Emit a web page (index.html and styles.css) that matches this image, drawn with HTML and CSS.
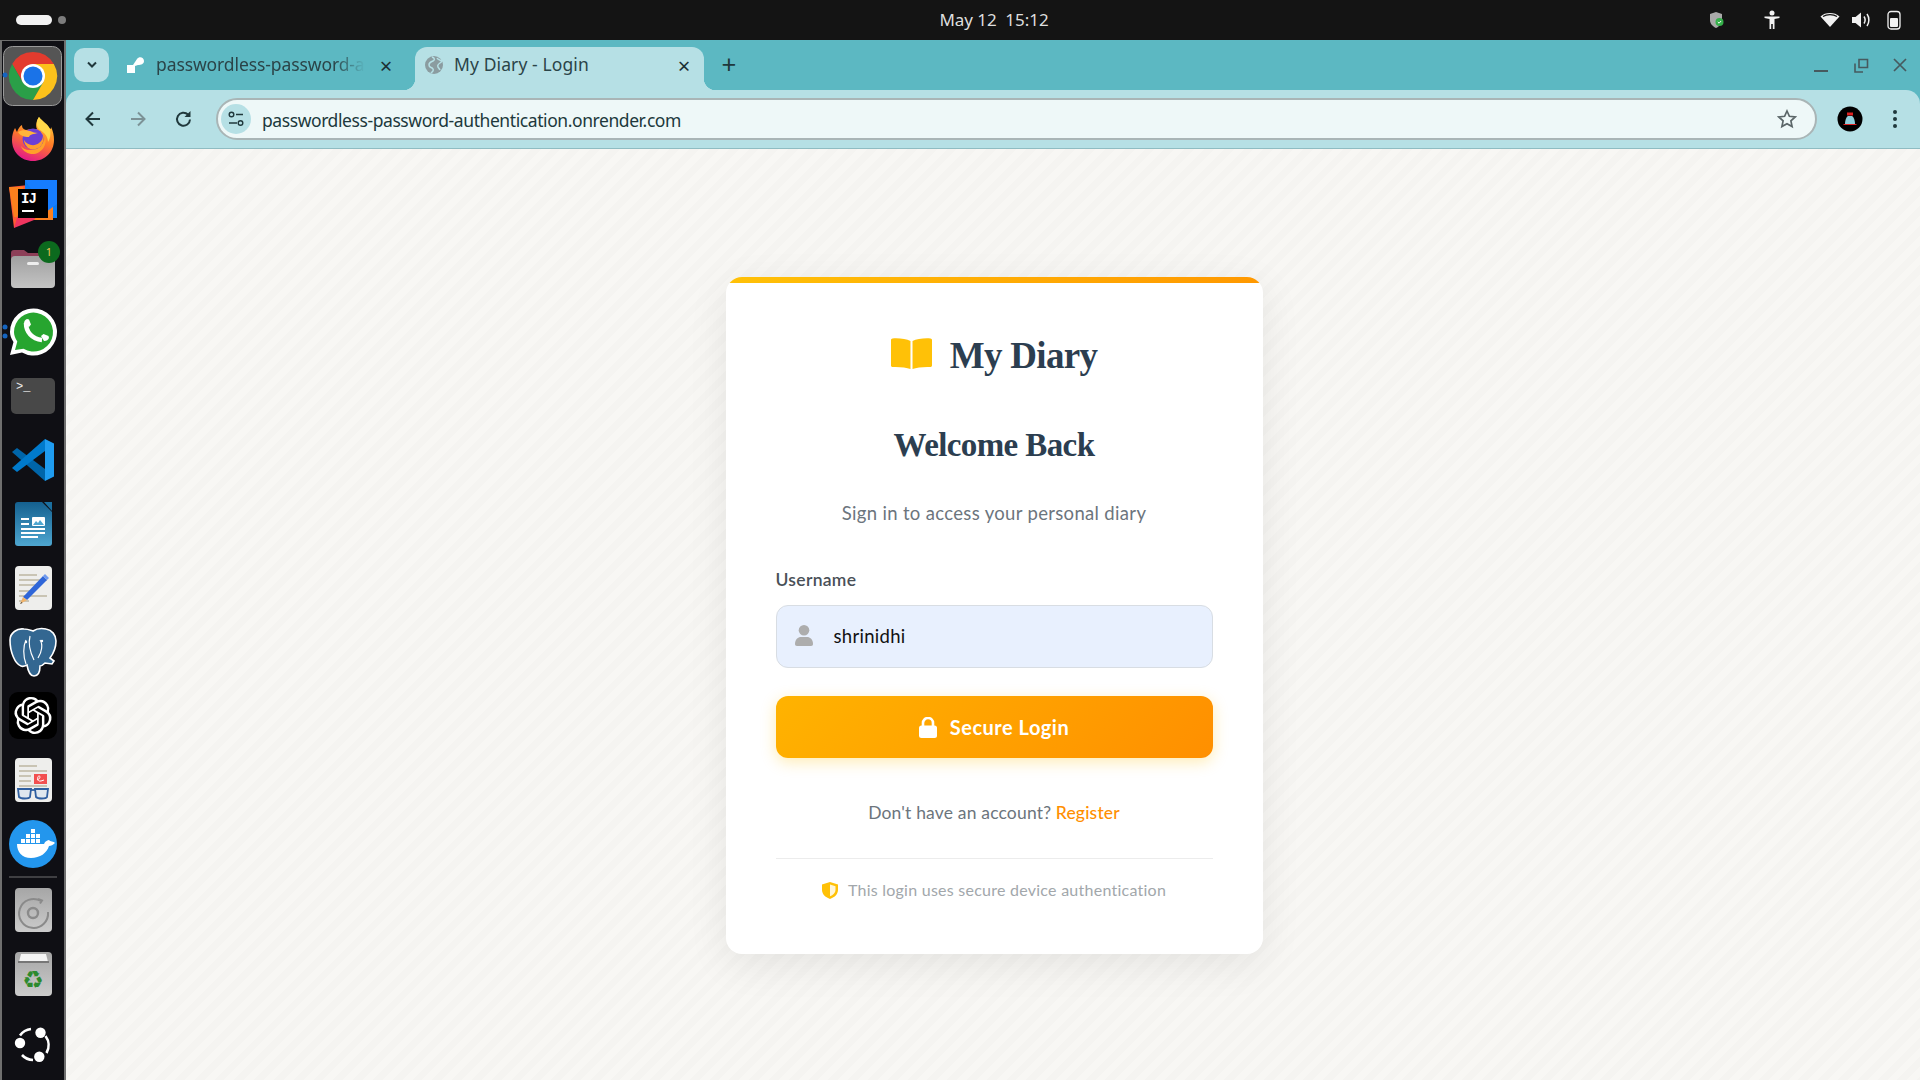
FILE: index.html
```html
<!DOCTYPE html>
<html lang="en">
<head>
  <meta charset="UTF-8" />
  <meta name="viewport" content="width=device-width, initial-scale=1.0"/>
  <title>My Diary - Login</title>
  <link rel="stylesheet" href="styles.css">
</head>
<body>
  <!-- gnome top bar -->
  <header class="topbar">
    <div class="workspaces"><span class="pill"></span><span class="dot"></span></div>
    <div class="clock">May 12&nbsp;&nbsp;15:12</div>
    <div class="tray">
      <svg class="tray-shield" width="16" height="18" viewBox="0 0 16 18"><path d="M7 1l6 2v6c0 4-3 6.500-6 8-3-1.500-6-4-6-8V3z" fill="#a9a9a9"/><circle cx="10.500" cy="11" r="4" fill="#35b04a"/><path d="M8.800 11l1.300 1.200 2-2.200" stroke="#fff" stroke-width="1" fill="none"/></svg>
      <svg class="tray-person" width="18" height="20" viewBox="0 0 18 20"><circle cx="9" cy="3" r="2.500" fill="#f2f2f2"/><path d="M1.500 6.500h15v1.600l-5 .9V19H9.800v-5H8.200v5H6.500V9l-5-.9z" fill="#f2f2f2"/></svg>
      <svg class="tray-wifi" width="20" height="16" viewBox="0 0 20 16"><path d="M10 15L.500 4.500C3 2 6.300 1 10 1s7 1 9.500 3.500z" fill="#f2f2f2"/><path d="M3 4.600C5 3.200 7.400 2.600 10 2.600s5 .6 7 2" stroke="#141414" stroke-width="1.200" fill="none"/></svg>
      <svg class="tray-volume" width="19" height="18" viewBox="0 0 19 18"><path d="M0 6h3.500L9 1.500v15L3.500 12H0z" fill="#f2f2f2"/><path d="M12 5.500c1.300 2 1.300 5 0 7M15 3c2.500 3.500 2.500 8.500 0 12" stroke="#f2f2f2" stroke-width="1.500" fill="none"/></svg>
      <svg class="tray-battery" width="14" height="20" viewBox="0 0 14 20"><rect x="1" y="1.500" width="12" height="17.500" rx="3" fill="none" stroke="#f2f2f2" stroke-width="1.300"/><rect x="3" y="8" width="8" height="9" rx="1" fill="#f2f2f2"/></svg>
    </div>
  </header>

  <div class="desktop">
    <!-- ubuntu dock -->
    <nav class="dock">
      <svg class="dock-item" viewBox="0 0 66 64"><rect x="3.500" y="2.500" width="58" height="59" rx="9" fill="#555" stroke="#9a9a9a"/><circle cx="5" cy="31" r="2.500" fill="#1565c0"/><path d="M53.800 20A24 24 0 0 0 12.200 20L22.600 38 33 20z" fill="#e33b2e"/><path d="M12.200 20A24 24 0 0 0 33 56L43.400 38H22.600z" fill="#2a9f48"/><path d="M33 56A24 24 0 0 0 53.800 20H33L43.400 38z" fill="#fcc11b"/><circle cx="33" cy="32" r="12" fill="#fff"/><circle cx="33" cy="32" r="9.500" fill="#1a73e8"/></svg>

      <svg class="dock-item" viewBox="0 0 66 64">
        <defs><linearGradient id="fx" x1="0.750" y1="0" x2="0.350" y2="1"><stop offset="0" stop-color="#ffcf3a"/><stop offset=".5" stop-color="#ff7a28"/><stop offset="1" stop-color="#e3178a"/></linearGradient></defs>
        <path d="M39 9c2 4 9 8 11 12 1 0 1-1 1-2 2 4 3 8 3 13 0 12-9 21-21 21S12 44 12 32c0-5 1-8 3-12 1 1 1 3 2 4 1-3 3-6 5-7 0 3 1 4 4 5 3-1 8-1 11-1-2-4 0-9 2-12z" fill="url(#fx)"/>
        <path d="M39 9c-3 4-3 10 1 13 5 3 8 7 8 12 2-3 3-7 2-13-2-5-8-8-11-12z" fill="#ffd84a"/>
        <path d="M45 28c3 9-4 19-14 18-5-1-9-4-10-8 3 4 8 5 13 3 7-2 11-7 11-13z" fill="#ffa02a"/>
        <circle cx="33" cy="31" r="10.500" fill="#6b3fd4"/>
        <path d="M24 32c3 5 10 7 15 3 3-2 4-5 4-8 1 5 0 9-3 12-4 3-9 3-12 1-2-2-4-5-4-8z" fill="#ff9e2c"/>
        <path d="M18 24c3-2 8-2 12-1 3 1 5 2 8 2-4 1-8 1-9 4-2 0-8 0-11-5z" fill="#ffb43a"/>
      </svg>

      <svg class="dock-item" viewBox="0 0 66 64"><path d="M9 15l20-2-3 32-12 11z" fill="#ff5a36"/><path d="M9 15h14l6 30H14z" fill="#fc801d"/><path d="M25 8h32v38H25z" fill="#0a7cf4"/><path d="M14 56l8-26 30 1v17H34z" fill="#f0355f"/><path d="M46 32h7v16H34z" fill="#fc801d"/><path d="M25 8h32v24L46 40z" fill="#167dff"/><rect x="18" y="17" width="30" height="29" fill="#000"/><text class="ij" x="21" y="31">IJ</text><rect x="22" y="38" width="12" height="2" fill="#fff"/></svg>

      <svg class="dock-item" viewBox="0 0 66 64"><path d="M11 17c0-2 1-3 3-3h10l4 3h22c2 0 3 1 3 3v8H11z" fill="#8d3f58"/><rect x="11" y="20" width="44" height="32" rx="4" fill="url(#fileg)"/><defs><linearGradient id="fileg" x1="0" y1="0" x2="0" y2="1"><stop offset="0" stop-color="#a0a0a0"/><stop offset="1" stop-color="#c4c4c4"/></linearGradient></defs><rect x="27" y="26" width="12" height="3" rx="1.500" fill="#eee"/><circle cx="49" cy="16" r="11" fill="#0c6a1e"/><text class="badge" x="49" y="20">1</text></svg>

      <svg class="dock-item" viewBox="0 0 66 64"><circle cx="5" cy="27" r="2.500" fill="#1565c0"/><circle cx="5" cy="36" r="2.500" fill="#1565c0"/><path d="M10 55l3.500-13C11 38 10 35 10 32a23.500 23.500 0 1 1 12 20.500z" fill="#fff"/><path d="M15 50l2.300-8.500C15 38 14 35 14 32a19.500 19.500 0 1 1 9.500 16.800z" fill="#27a52f"/><path d="M26 23c0 9 6 16 16 17" stroke="#fff" stroke-width="4.500" fill="none"/><path d="M24 24c0-3 1-4 3-5l2 .5 2 5-2 2.500zM41 36l2.500-2 5 2 .5 2c-1 2-2 3-5 3z" fill="#fff"/></svg>

      <svg class="dock-item" viewBox="0 0 66 64"><rect x="11" y="14" width="44" height="36" rx="5" fill="#484848"/><text class="term" x="16" y="26">&gt;_</text></svg>

      <svg class="dock-item" viewBox="0 0 66 64"><path d="M12 24l5-4 28 21v12z" fill="#0065a9"/><path d="M45 11v12L17 44l-5-4z" fill="#007acc"/><path d="M45 11l9 4.500v33L45 53z" fill="#1f9cf0"/></svg>

      <svg class="dock-item" viewBox="0 0 66 64"><defs><linearGradient id="wr" x1="0" y1="0" x2="0" y2="1"><stop offset="0" stop-color="#14608f"/><stop offset="1" stop-color="#4ea6d0"/></linearGradient></defs><path d="M18 10h24l10 10v31c0 2-1 3-3 3H18c-2 0-3-1-3-3V13c0-2 1-3 3-3z" fill="url(#wr)"/><path d="M44 10h8v9z" fill="#1b6f9f"/><g fill="#fff"><rect x="21" y="26" width="8" height="2"/><rect x="21" y="31" width="8" height="2"/><rect x="21" y="36" width="24" height="2"/><rect x="21" y="40" width="24" height="2"/><rect x="21" y="44" width="17" height="2"/></g><rect x="32" y="25" width="13" height="9" rx="1" fill="#fff"/><path d="M33 33l3-4 2 2 2-3 4 5z" fill="#4ea6d0"/></svg>

      <svg class="dock-item" viewBox="0 0 66 64"><rect x="15" y="10" width="37" height="44" rx="4" fill="#eeeeec"/><g fill="#c9c4b4"><rect x="19" y="18" width="18" height="2"/><rect x="19" y="23" width="28" height="2"/><rect x="19" y="28" width="20" height="2"/><rect x="19" y="34" width="14" height="2"/><rect x="19" y="39" width="28" height="2"/><rect x="19" y="44" width="10" height="2"/></g><path d="M23 41l20-21 4 4-20 20z" fill="#2f66d8"/><path d="M43 20l2-2 4 4-2 2z" fill="#6f99ee"/><path d="M23 41l4 3-7 4z" fill="#f0b36a"/><path d="M21.500 46l-1.500 2 2.500-1z" fill="#444"/></svg>

      <svg class="dock-item" viewBox="0 0 66 64"><path d="M10 20c0-7 7-12 14-11 4 0 6 1 9 2 3-2 8-3 13-2 6 1 10 6 10 12 0 7-3 13-6 17l4 3-2 3-7-1c-2 2-4 3-5 3 0 5-1 10-6 10-4 0-6-5-7-11-2 1-4 2-6 1-6-2-11-14-11-26z" fill="#336791" stroke="#fff" stroke-width="1.600"/><path d="M26 20c-3 6-3 16 0 24M40 20c3 4 2 12-2 18M30 16c-2 8 0 16 4 24" stroke="#fff" stroke-width="1.200" fill="none"/><circle cx="26" cy="22" r="1.200" fill="#fff"/><circle cx="42" cy="21" r="1.200" fill="#fff"/></svg>

      <svg class="dock-item" viewBox="0 0 66 64"><rect x="9" y="8" width="48" height="47" rx="9" fill="#000"/><path transform="translate(14.400 12.900) scale(1.550)" fill="#fff" d="M22.2819 9.8211a5.9847 5.9847 0 0 0-.5157-4.9108 6.0462 6.0462 0 0 0-6.5098-2.9A6.0651 6.0651 0 0 0 4.9807 4.1818a5.9847 5.9847 0 0 0-3.9977 2.9 6.0462 6.0462 0 0 0 .7427 7.0966 5.98 5.98 0 0 0 .511 4.9107 6.051 6.051 0 0 0 6.5146 2.9001A5.9847 5.9847 0 0 0 13.2599 24a6.0557 6.0557 0 0 0 5.7718-4.2058 5.9894 5.9894 0 0 0 3.9977-2.9001 6.0557 6.0557 0 0 0-.7475-7.0729zm-9.022 12.6081a4.4755 4.4755 0 0 1-2.8764-1.0408l.1419-.0804 4.7783-2.7582a.7948.7948 0 0 0 .3927-.6813v-6.7369l2.02 1.1686a.071.071 0 0 1 .038.052v5.5826a4.504 4.504 0 0 1-4.4945 4.4944zm-9.6607-4.1254a4.4708 4.4708 0 0 1-.5346-3.0137l.142.0852 4.783 2.7582a.7712.7712 0 0 0 .7806 0l5.8428-3.3685v2.3324a.0804.0804 0 0 1-.0332.0615L9.74 19.9502a4.4992 4.4992 0 0 1-6.1408-1.6464zM2.3408 7.8956a4.485 4.485 0 0 1 2.3655-1.9728V11.6a.7664.7664 0 0 0 .3879.6765l5.8144 3.3543-2.0201 1.1685a.0757.0757 0 0 1-.071 0l-4.8303-2.7865A4.504 4.504 0 0 1 2.3408 7.872zm16.5963 3.8558L13.1038 8.364 15.1192 7.2a.0757.0757 0 0 1 .071 0l4.8303 2.7913a4.4944 4.4944 0 0 1-.6765 8.1042v-5.6772a.79.79 0 0 0-.407-.667zm2.0107-3.0231l-.142-.0852-4.7735-2.7818a.7759.7759 0 0 0-.7854 0L9.409 9.2297V6.8974a.0662.0662 0 0 1 .0284-.0615l4.8303-2.7866a4.4992 4.4992 0 0 1 6.6802 4.66zM8.3065 12.863l-2.02-1.1638a.0804.0804 0 0 1-.038-.0567V6.0742a4.4992 4.4992 0 0 1 7.3757-3.4537l-.142.0805L8.704 5.459a.7948.7948 0 0 0-.3927.6813zm1.0976-2.3654l2.602-1.4998 2.6069 1.4998v2.9994l-2.5974 1.4997-2.6067-1.4997Z"/></svg>

      <svg class="dock-item" viewBox="0 0 66 64"><rect x="15" y="10" width="37" height="44" rx="4" fill="#eeeeec"/><g fill="#c9c4b4"><rect x="19" y="17" width="18" height="2"/><rect x="19" y="22" width="28" height="2"/><rect x="19" y="27" width="12" height="2"/><rect x="19" y="32" width="12" height="2"/><rect x="19" y="37" width="28" height="2"/></g><rect x="34" y="26" width="13" height="10" fill="#f25050"/><path d="M37 32c3-1 4-4 2-4s-2 6 2 5l3-1" stroke="#fff" fill="none"/><g fill="#cfe0f0" fill-opacity=".5" stroke="#2f5fa0" stroke-width="1.800"><path d="M18 41h13l-1 8c-1 2-9 2-11 0z"/><path d="M35 41h13l-1 8c-1 2-9 2-11 0z"/></g><path d="M31 42h4" stroke="#2f5fa0" stroke-width="1.800"/></svg>

      <svg class="dock-item" viewBox="0 0 66 64"><circle cx="33" cy="32" r="24" fill="#2396ed"/><path d="M17 32h27c1-3 4-4 5-4 1 2 5 1 6 3-2 2-4 3-6 3-2 7-9 12-18 12-9 0-14-6-14-14z" fill="#fff"/><g fill="#fff"><rect x="21" y="27" width="4" height="4"/><rect x="26" y="27" width="4" height="4"/><rect x="31" y="27" width="4" height="4"/><rect x="36" y="27" width="4" height="4"/><rect x="26" y="22" width="4" height="4"/><rect x="31" y="22" width="4" height="4"/><rect x="36" y="22" width="4" height="4"/><rect x="31" y="17" width="4" height="4"/></g></svg>

      <div class="dock-sep"></div>

      <svg class="dock-item" viewBox="0 0 66 64"><defs><linearGradient id="tile" x1="0" y1="0" x2="0" y2="1"><stop offset="0" stop-color="#a6a6a6"/><stop offset="1" stop-color="#cbcbcb"/></linearGradient></defs><rect x="15" y="10" width="37" height="44" rx="4" fill="url(#tile)"/><path d="M41 23a14.500 14.500 0 1 0 7 11" fill="none" stroke="#8a8a8a" stroke-width="2"/><path d="M38 21l4 1.500-2 3" fill="none" stroke="#8a8a8a" stroke-width="2"/><circle cx="33" cy="35" r="5" fill="none" stroke="#8a8a8a" stroke-width="2.400"/></svg>

      <svg class="dock-item" viewBox="0 0 66 64"><rect x="15" y="10" width="37" height="44" rx="4" fill="url(#tile)"/><path d="M19 20l2-8h25l2 8z" fill="#f4f4f4"/><path d="M18 21h31v-2H18z" fill="#777"/><text class="recycle" x="33" y="46">♻</text></svg>

      <svg class="dock-item dock-end" viewBox="0 0 66 64"><g fill="none" stroke="#fff" stroke-width="2.600"><path d="M20 22.500a15.500 15.500 0 0 1 11-6.500"/><path d="M45.500 23a15.500 15.500 0 0 1 1 17"/><path d="M22 42a15.500 15.500 0 0 0 11 5"/></g><circle cx="40.500" cy="19.700" r="5.200" fill="#fff"/><circle cx="20" cy="30" r="5.200" fill="#fff"/><circle cx="39.300" cy="43.700" r="5.200" fill="#fff"/></svg>
    </nav>

    <div class="browser">
      <!-- tab strip -->
      <div class="tabstrip">
        <button class="tab-search"><svg width="12" height="8" viewBox="0 0 12 8"><path d="M2 1.500l4 4 4-4" fill="none" stroke="#20383c" stroke-width="2"/></svg></button>
        <div class="tab">
          <svg class="favicon" width="20" height="20" viewBox="0 0 20 20"><path d="M1 18v-8h6l4-6c2-3 7-2 7 2 0 3-3 4-6 4l-3 1v7z" fill="#fff"/></svg>
          <span class="tab-title fade">passwordless-password-a</span>
          <span class="tab-close">×</span>
        </div>
        <div class="tab active">
          <svg class="favicon" width="18" height="18" viewBox="0 0 18 18"><circle cx="9" cy="9" r="9" fill="#8b9ca0"/><path d="M7 1c3 1 3 3 1 4S4 6 4 9s3 2 4 4-1 3-2 4M12 2c1 2 3 2 5 3-1 2-3 2-4 4s1 3 2 5" fill="none" stroke="#b6e0e5" stroke-width="1.500"/></svg>
          <span class="tab-title">My Diary - Login</span>
          <span class="tab-close">×</span>
        </div>
        <span class="tab-new">+</span>
        <div class="window-controls">
          <svg width="16" height="4" viewBox="0 0 16 4"><rect y="1" width="14" height="2" fill="#465a5f"/></svg>
          <svg width="15" height="15" viewBox="0 0 15 15"><path d="M5 1.500h8.500v8H5zM1 5.500v8.500h8" fill="none" stroke="#465a5f" stroke-width="1.600"/></svg>
          <svg width="14" height="14" viewBox="0 0 14 14"><path d="M1 1l12 12M13 1L1 13" stroke="#465a5f" stroke-width="1.700"/></svg>
        </div>
      </div>

      <!-- address bar -->
      <div class="toolbar">
        <svg class="nav-icon" width="20" height="20" viewBox="0 0 20 20"><path d="M17 10H4M10 3.500L3.500 10l6.500 6.500" fill="none" stroke="#20383c" stroke-width="2"/></svg>
        <svg class="nav-icon" width="20" height="20" viewBox="0 0 20 20"><path d="M3 10h13M10 3.500l6.500 6.500-6.500 6.500" fill="none" stroke="#7c9296" stroke-width="2"/></svg>
        <svg class="nav-icon" width="20" height="20" viewBox="0 0 20 20"><path d="M16 10.500a6.500 6.500 0 1 1-2-5" fill="none" stroke="#20383c" stroke-width="2"/><path d="M16.500 2v6h-6z" fill="#20383c"/></svg>
        <div class="omnibox">
          <span class="site-icon"><svg width="16" height="16" viewBox="0 0 16 16"><g fill="none" stroke="#20383c" stroke-width="1.400"><circle cx="3.500" cy="3.500" r="2.300"/><path d="M8 3.500h7M1 12h8"/><circle cx="12.500" cy="12" r="2.300"/></g></svg></span>
          <span class="url">passwordless-password-authentication.onrender.com</span>
          <svg class="star" width="20" height="20" viewBox="0 0 20 20"><path d="M10 2l2.400 5.300 5.800.7-4.300 3.900 1.200 5.700L10 14.700l-5.100 2.900 1.200-5.700L1.800 8l5.800-.7z" fill="none" stroke="#5b6668" stroke-width="1.700"/></svg>
        </div>
        <svg class="avatar" width="26" height="26" viewBox="0 0 26 26"><circle cx="13" cy="13" r="12.500" fill="#000"/><path d="M8 18c0-3 1-7 3-8h4c2 1 3 5 3 8z" fill="#8fd0dc"/><rect x="10" y="6.500" width="6" height="3" fill="#d22"/><rect x="6.500" y="18" width="13" height="1" fill="#d22"/></svg>
        <svg class="menu" width="6" height="20" viewBox="0 0 6 20"><circle cx="3" cy="3" r="2" fill="#20383c"/><circle cx="3" cy="10" r="2" fill="#20383c"/><circle cx="3" cy="17" r="2" fill="#20383c"/></svg>
      </div>

      <!-- page -->
      <main class="page">
        <section class="card">
          <div class="card-stripe"></div>
          <div class="card-body">
            <div class="brand">
              <svg width="41" height="31" viewBox="0 0 40 31" preserveAspectRatio="none"><path d="M19 3C15 1 8 0 1.500.5.600.600 0 1.300 0 2v25.500C0 28.300.700 29 1.500 29 8 28.600 15 29.500 19 31z" fill="#ffc107"/><path d="M21 3c4-2 11-3 17.500-2.500.900.100 1.500.800 1.500 1.500v25.500c0 .800-.700 1.500-1.500 1.500C32 28.600 25 29.500 21 31z" fill="#ffc107"/></svg>
              <span class="brand-name">My Diary</span>
            </div>
            <h1 class="title">Welcome Back</h1>
            <p class="subtitle">Sign in to access your personal diary</p>
            <label class="field-label">Username</label>
            <div class="input-box">
              <svg width="18" height="21" viewBox="0 0 18 21"><circle cx="9" cy="5.300" r="5.300" fill="#adadad"/><path d="M0 19c0-4.500 3-7 6-7h6c3 0 6 2.500 6 7 0 1-.700 2-2 2H2c-1.300 0-2-1-2-2z" fill="#adadad"/></svg>
              <span class="input-value">shrinidhi</span>
            </div>
            <button class="login-btn">
              <svg width="18" height="21" viewBox="0 0 18 21"><path d="M4 9V6a5 5 0 0 1 10 0v3" fill="none" stroke="#fff" stroke-width="2.600"/><rect y="8.500" width="18" height="12.500" rx="2.500" fill="#fff"/></svg>
              <span>Secure Login</span>
            </button>
            <p class="register">Don't have an account? <a href="#">Register</a></p>
            <div class="divider"></div>
            <p class="secure-note">
              <svg width="16" height="17" viewBox="0 0 16 17"><path d="M8 0l8 2.500V8c0 4.500-4 7.500-8 9-4-1.500-8-4.500-8-9V2.500z" fill="#ffc107"/><path d="M8 2.500l5.500 1.700V8c0 3-2.500 5-5.500 6.300z" fill="#fff6d8"/></svg>
              <span>This login uses secure device authentication</span>
            </p>
          </div>
        </section>
      </main>
    </div>
  </div>
</body>
</html>
```

FILE: styles.css
```css
* {
  box-sizing: border-box;
}

body {
  margin: 0;
  width: 1920px;
  height: 1080px;
  overflow: hidden;
  font-family: "Noto Sans", sans-serif;
  background: #141414;
}

/* top bar */
.topbar {
  height: 40px;
  background: #141414;
  display: grid;
  grid-template-columns: 1fr auto 1fr;
  align-items: center;
  padding: 0 16px;
}

.workspaces {
  display: flex;
  align-items: center;
  gap: 6px;
}

.pill {
  width: 36px;
  height: 10px;
  border-radius: 5px;
  background: #f2f2f2;
}

.dot {
  width: 8px;
  height: 8px;
  border-radius: 50%;
  background: #7d7d7d;
}

.clock {
  color: #dedede;
  font-size: 17px;
  letter-spacing: -0.05px;
  margin: 0 0 2px 68px;
}

.tray {
  display: flex;
  align-items: center;
  justify-self: end;
  margin-right: 3px;
}

.tray svg {
  display: block;
}

.tray-person {
  margin-left: 38px;
}

.tray-wifi {
  margin-left: 39px;
}

.tray-volume {
  margin-left: 12px;
}

.tray-battery {
  margin-left: 16px;
}

.desktop {
  display: flex;
  height: 1040px;
}

/* dock */
.dock {
  width: 66px;
  flex: none;
  background: #0f0f14;
  box-shadow: inset 2px 0 #6f6f6f, inset -2px 0 #6f6f6f, inset 0 1px #6f6f6f;
  display: flex;
  flex-direction: column;
  padding: 4px 0 3px;
}

.dock-item {
  display: block;
  width: 66px;
  height: 64px;
  flex: none;
}

.dock-end {
  margin-top: auto;
}

.dock-sep {
  height: 2px;
  flex: none;
  margin: 0 9px;
  background: #3f3f42;
}

.ij {
  font: bold 14px "Liberation Mono", monospace;
  fill: #fff;
  letter-spacing: -1px;
}

.badge {
  font: 11px "Noto Sans", sans-serif;
  fill: #f5c45a;
  text-anchor: middle;
}

.term {
  font: 12px "Liberation Mono", monospace;
  fill: #eee;
}

.recycle {
  font: 24px "DejaVu Sans", sans-serif;
  fill: #2d8a2d;
  text-anchor: middle;
}

/* browser */
.browser {
  flex: 1;
  display: flex;
  flex-direction: column;
  background: #5cb8c2;
  min-width: 0;
}

.tabstrip {
  height: 50px;
  flex: none;
  display: flex;
  align-items: flex-end;
  padding-left: 8px;
  color: #20383c;
}

.tab-search {
  width: 35px;
  height: 34px;
  margin-bottom: 8px;
  border: none;
  border-radius: 10px;
  background: #b6e0e5;
  padding: 0;
  display: flex;
  align-items: center;
  justify-content: center;
}

.tab {
  height: 43px;
  display: flex;
  align-items: center;
  position: relative;
  padding-bottom: 8px;
}

.tab:nth-of-type(1) {
  width: 306px;
  padding-left: 17px;
}

.tab.active {
  width: 289px;
  padding-left: 10px;
  background: #b6e0e5;
  border-radius: 12px 12px 0 0;
}

.tab.active::before,
.tab.active::after {
  content: "";
  position: absolute;
  bottom: 0;
  width: 12px;
  height: 12px;
}

.tab.active::before {
  left: -12px;
  background: radial-gradient(circle at 0 0, transparent 12px, #b6e0e5 12.5px);
}

.tab.active::after {
  right: -12px;
  background: radial-gradient(circle at 100% 0, transparent 12px, #b6e0e5 12.5px);
}

.favicon {
  flex: none;
}

.tab-title {
  font-size: 17.5px;
  white-space: nowrap;
  letter-spacing: 0.1px;
  margin: 0 0 2px 11px;
  color: #2b4448;
}

.tab-title.fade {
  margin-left: 10px;
  -webkit-mask-image: linear-gradient(90deg, #000 85%, transparent);
  mask-image: linear-gradient(90deg, #000 85%, transparent);
  letter-spacing: -0.1px;
}

.tab-close {
  margin-left: auto;
  width: 24px;
  margin-right: 8px;
  text-align: center;
  font-size: 22px;
  line-height: 24px;
  color: #1d3034;
}

.tab:nth-of-type(1) .tab-close {
  margin-right: 17px;
}

.tab-new {
  width: 50px;
  text-align: center;
  font-size: 26px;
  line-height: 36px;
  margin-bottom: 8px;
  color: #20383c;
}

.window-controls {
  margin-left: auto;
  display: flex;
  align-items: center;
  gap: 24px;
  height: 40px;
  padding-right: 13px;
  align-self: flex-start;
  margin-top: 5px;
}

.window-controls svg:first-child {
  margin-top: 12px;
}

.toolbar {
  height: 59px;
  flex: none;
  background: #b6e0e5;
  border-radius: 14px 14px 0 0;
  border-bottom: 1px solid #8fbcc2;
  display: flex;
  align-items: center;
  padding: 0 0 1px 17px;
}

.nav-icon {
  margin-right: 25px;
  flex: none;
}

.nav-icon:nth-child(3) {
  margin-left: 1px;
  margin-right: 24px;
}

.omnibox {
  width: 1601px;
  height: 42px;
  margin-left: -2px;
  background: #eef8f8;
  border: 2px solid #a9b5b6;
  border-radius: 21px;
  display: flex;
  align-items: center;
  padding: 0 18px 0 3px;
}

.site-icon {
  width: 30px;
  height: 30px;
  border-radius: 50%;
  background: #b6e0e5;
  display: flex;
  align-items: center;
  justify-content: center;
  flex: none;
}

.url {
  font-size: 17.5px;
  letter-spacing: -0.42px;
  margin: 2px 0 0 11px;
  color: #20383c;
}

.star {
  margin-left: auto;
}

.avatar {
  margin-left: 20px;
  flex: none;
}

.menu {
  margin-left: 29px;
  flex: none;
}

/* login page */
.page {
  flex: 1;
  display: flex;
  align-items: center;
  justify-content: center;
  padding: 2px 0 0 2px;
  background: repeating-linear-gradient(135deg, #f8f7f4 0 7px, #f5f4f1 7px 14px);
}

.card {
  width: 537px;
  height: 677px;
  background: #fff;
  border-radius: 16px;
  overflow: hidden;
  box-shadow: 0 10px 40px rgba(0, 0, 0, 0.08);
}

.card-stripe {
  height: 6px;
  background: linear-gradient(90deg, #ffc107, #ff9800);
}

.card-body {
  padding: 48px 50px 0;
  display: flex;
  flex-direction: column;
}

.brand {
  height: 50px;
  display: flex;
  align-items: center;
  justify-content: center;
  gap: 18px;
  color: #2c3e50;
}

.brand svg {
  margin-bottom: 5px;
}

.brand-name {
  font: bold 37px/50px "Liberation Serif", serif;
  letter-spacing: -0.7px;
}

.title {
  margin: 44px 0 0;
  text-align: center;
  font: bold 33px/40px "Liberation Serif", serif;
  letter-spacing: -0.6px;
  color: #2c3e50;
}

.subtitle {
  margin: 36px 0 0;
  text-align: center;
  font: 18.5px/24px Lato, sans-serif;
  letter-spacing: 0.33px;
  color: #6c757d;
}

.field-label {
  margin-top: 44px;
  font: 600 17.5px/22px Lato, sans-serif;
  letter-spacing: 0.3px;
  color: #495057;
}

.input-box {
  margin-top: 14px;
  height: 63px;
  background: #e8f0fe;
  border: 1px solid #d8dde3;
  border-radius: 12px;
  display: flex;
  align-items: center;
  padding: 0 0 2px 18px;
  gap: 21px;
}

.input-value {
  font: 18.5px Lato, sans-serif;
  letter-spacing: 0.3px;
  color: #111;
}

.login-btn {
  margin-top: 28px;
  height: 62px;
  border: none;
  border-radius: 12px;
  background: linear-gradient(135deg, #ffb300, #ff8f00);
  box-shadow: 0 4px 15px rgba(255, 193, 7, 0.3);
  display: flex;
  align-items: center;
  justify-content: center;
  gap: 13px;
  font: bold 20px Lato, sans-serif;
  letter-spacing: 0.5px;
  color: #fff;
}

.register {
  margin: 43px 0 0;
  text-align: center;
  font: 17.5px/24px Lato, sans-serif;
  letter-spacing: 0.17px;
  color: #6c757d;
}

.register a {
  color: #ff8f00;
  font-weight: 500;
  text-decoration: none;
}

.divider {
  margin-top: 33px;
  height: 1px;
  background: #ececec;
}

.secure-note {
  margin: 20px 0 0;
  display: flex;
  align-items: center;
  justify-content: center;
  gap: 10px;
  font: 16px/22px Lato, sans-serif;
  letter-spacing: 0.25px;
  color: #a2a7ab;
}
```
